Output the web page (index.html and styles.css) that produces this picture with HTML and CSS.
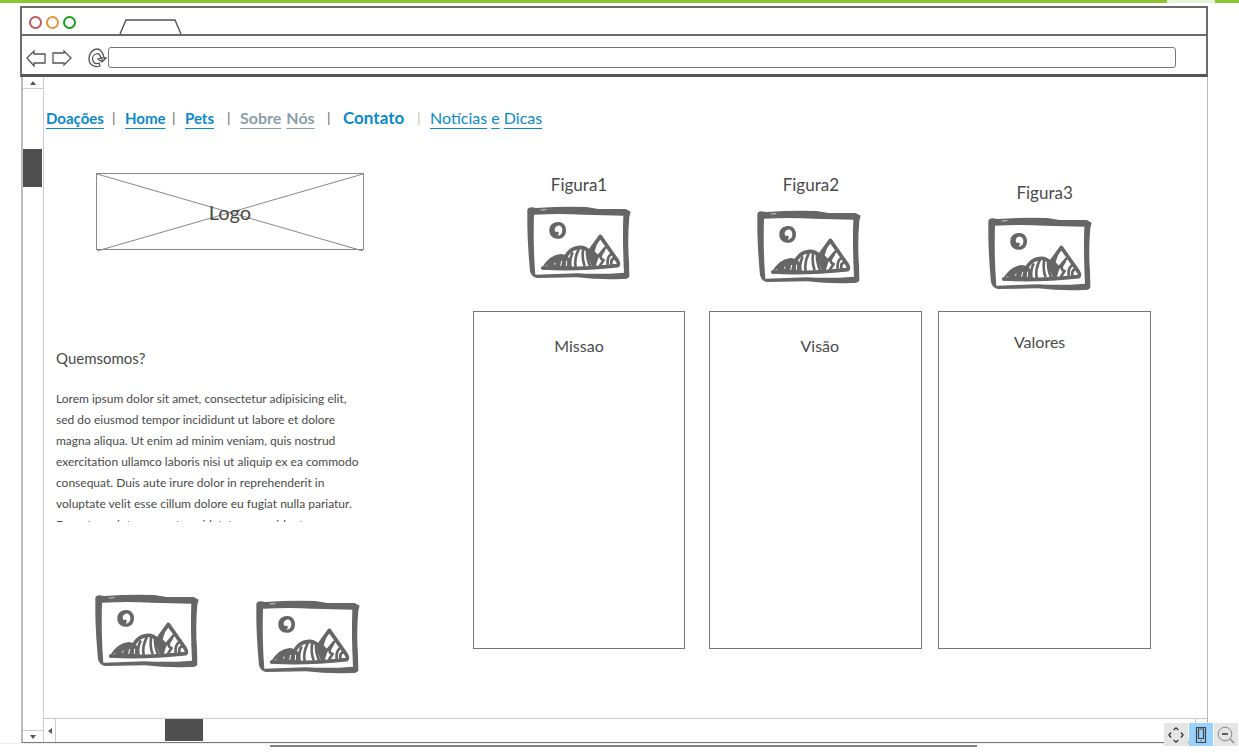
FILE: index.html
```html
<!DOCTYPE html>
<html lang="pt-BR">
<head>
<meta charset="utf-8">
<title>Sobre Nós</title>
<link rel="stylesheet" href="styles.css">
</head>
<body>
<svg class="defs" aria-hidden="true">
  <symbol id="picture" viewBox="0 0 312 222">
    <path fill="#666" fill-rule="evenodd" d="M1 12 Q2 5 14 4 L28 6 Q110 0 178 3 L214 9 L296 9 L311 17 L307 32 Q301 100 306 165 L307 212 Q302 220 285 219 Q220 222 150 214 L30 216 Q14 214 9 196 Q2 120 1 60 Z M21 26 Q100 22 170 26 L289 29 Q286 100 291 200 Q220 206 150 202 L25 206 Q18 120 21 26 Z"/>
    <path stroke="#fff" stroke-width="2" d="M41 12 L58 11"/>
    <path fill="#666" fill-rule="evenodd" d="M92 48 C108 46 118 60 117 74 C116 90 106 99 91 98 C75 97 66 86 67 71 C68 57 78 49 92 48 Z M93 59 C101 57 107 66 106 74 C106 82 100 88 92 89 C99 80 95 76 86 78 C80 70 84 61 93 59 Z"/>
    <path fill="#666" d="M44 186 Q66 147 101 144 Q119 145 128 158 L126 184 L46 191 Z"/>
    <path fill="#666" d="M187 133 L212 108 L203 136 L216 150 L205 184 L194 180 L180 146 Z"/>
    <g fill="none" stroke="#666" stroke-linecap="round" stroke-linejoin="round">
      <path stroke-width="11" d="M47 186 Q150 192 272 179 Q277 174 271 164 L220 91 L187 137 Q172 121 153 125 Q129 128 115 154"/>
      <path stroke-width="8" d="M136 142 Q126 162 131 183 M155 130 Q141 158 146 183 M168 132 Q165 160 172 178 M180 136 Q179 156 189 181 M235 125 L207 158 M230 134 Q212 158 230 162 L220 177 M252 145 Q240 153 242 174 M261 157 Q249 162 254 178"/>
    </g>
    <path fill="none" stroke="#fff" stroke-width="3" d="M57 181 L60 178 M83 176 L84 170 M101 180 L104 165 M118 180 L119 164 M264 174 L266 170"/>
  </symbol>
</svg>

<div class="strip"><span class="strip-tab"></span></div>

<div class="browser">
  <header class="titlebar">
    <span class="light red"></span><span class="light amber"></span><span class="light green"></span>
    <svg class="tab" width="64" height="15" viewBox="0 0 64 15"><path d="M2 15 L8 1 H57 L63 15" fill="none" stroke="#555" stroke-width="1.4"/></svg>
  </header>

  <div class="toolbar">
    <button class="tool" aria-label="Voltar"><svg width="20" height="18" viewBox="0 0 20 18"><path d="M1 9 L8 2 V5 H19 V14 H8 V17 Z"/></svg></button>
    <button class="tool" aria-label="Avançar"><svg width="20" height="18" viewBox="0 0 20 18"><path d="M19 9 L12 2 V4 H1 V14 H12 V16 Z"/></svg></button>
    <button class="tool reload" aria-label="Recarregar"><svg width="19" height="20" viewBox="0 0 19 20"><path d="M11 15 L12 18 C7 20 1 17 1 11 C1 5 5 1 9 1 C13 1 15 5 16 10 H18 L14 14 L10 11 L13 10 C12 6 10 5 8 6 C5 7 4 10 5 13 C6 16 9 16 11 15 Z M14 14 V9"/></svg></button>
    <input class="address" type="text" aria-label="Endereço">
  </div>

  <div class="viewport">
    <div class="vscroll">
      <button class="step" aria-label="Subir"><svg width="6" height="4" viewBox="0 0 6 4"><path d="M3 0 L6 4 H0 Z"/></svg></button>
      <div class="vtrack"><div class="vthumb"></div></div>
      <button class="step down" aria-label="Descer"><svg width="6" height="4" viewBox="0 0 6 4"><path d="M3 4 L6 0 H0 Z"/></svg></button>
    </div>

    <main class="page">
      <nav class="menu">
        <a href="#doacoes"><u>Doações</u></a><i>|</i>
        <a href="#home"><u>Home</u></a><i>|</i>
        <a href="#pets"><u>Pets</u></a><i>|</i>
        <a href="#sobre" class="current"><u>Sobre</u> <u>Nós</u></a><i>|</i>
        <a href="#contato" class="plain">Contato</a><i class="pale">|</i>
        <a href="#noticias" class="light-link"><u>Notícias</u> <u>e</u> <u>Dicas</u></a>
      </nav>

      <div class="columns">
        <section class="about">
          <div class="logo">
            <svg viewBox="0 0 266 75" preserveAspectRatio="none"><path d="M0 0 L266 75 M266 0 L0 75" stroke="#888" stroke-width="1"/></svg>
            <span>Logo</span>
          </div>
          <h2>Quemsomos?</h2>
          <p class="lorem">Lorem ipsum dolor sit amet, consectetur adipisicing elit,<br>sed do eiusmod tempor incididunt ut labore et dolore<br>magna aliqua. Ut enim ad minim veniam, quis nostrud<br>exercitation ullamco laboris nisi ut aliquip ex ea commodo<br>consequat. Duis aute irure dolor in reprehenderit in<br>voluptate velit esse cillum dolore eu fugiat nulla pariatur.<br>Excepteur sint occaecat cupidatat non proident,</p>
          <div class="thumbs">
            <svg class="picture"><use href="#picture"/></svg>
            <svg class="picture lower"><use href="#picture"/></svg>
          </div>
        </section>

        <section class="value first">
          <div class="figure"><h3>Figura1</h3><svg class="picture"><use href="#picture"/></svg></div>
          <div class="card"><h4>Missao</h4></div>
        </section>
        <section class="value second">
          <div class="figure"><h3>Figura2</h3><svg class="picture"><use href="#picture"/></svg></div>
          <div class="card"><h4>Visão</h4></div>
        </section>
        <section class="value third">
          <div class="figure"><h3>Figura3</h3><svg class="picture"><use href="#picture"/></svg></div>
          <div class="card"><h4>Valores</h4></div>
        </section>
      </div>
    </main>

    <div class="hscroll">
      <button class="step" aria-label="Esquerda"><svg width="4" height="6" viewBox="0 0 4 6"><path d="M0 3 L4 0 V6 Z"/></svg></button>
      <div class="htrack"><div class="hthumb"></div></div>
      <span class="step end"></span>
    </div>
  </div>
</div>

<footer class="bottom"><div class="bar"></div></footer>

<div class="zoom-tools">
  <button aria-label="Mover"><svg width="18" height="18" viewBox="0 0 18 18"><path d="M6.500 4 L9 2 L11.500 4 M6.500 14 L9 16 L11.500 14 M4 6.500 L2 9 L4 11.500 M14 6.500 L16 9 L14 11.500" stroke-width="1.500"/></svg></button>
  <button class="active" aria-label="Ajustar"><svg width="12" height="18" viewBox="0 0 12 18"><path d="M1.500 1.500 H10.500 V16.500 H1.500 Z M3.500 3 H8.500 V12.500 H3.500 Z" stroke-width="1.200"/><path d="M5 14.500 H7" stroke="#68a"/></svg></button>
  <button aria-label="Reduzir"><svg width="18" height="18" viewBox="0 0 18 18"><circle cx="8" cy="8" r="6.800" stroke="#888"/><path d="M13 13 L17 17" stroke="#888" stroke-width="1.500"/><path d="M5 8 H11" stroke-width="1.700"/></svg></button>
</div>
</body>
</html>
```
FILE: styles.css
```css
* { box-sizing: border-box; }

body {
  margin: 0;
  min-height: 100vh;
  display: flex;
  flex-direction: column;
  background: #fff;
  color: #4a4a4a;
  font-family: Lato, sans-serif;
}

h2, h3, h4, p { margin: 0; font-weight: 400; }
button { padding: 0; border: 0; background: none; display: flex; align-items: center; justify-content: center; }
.defs { position: absolute; width: 0; height: 0; }

.strip { height: 3px; background: #8dc531; display: flex; justify-content: flex-end; padding-right: 24px; }
.strip-tab { width: 48px; background: #e8f4d8; }

.browser { flex: 1; display: flex; flex-direction: column; margin: 3px 31px 0 20px; }

.titlebar {
  height: 28px;
  display: flex;
  align-items: center;
  gap: 4px;
  padding-left: 7px;
  border: 2px solid #6b6b6b;
  border-bottom: 0;
}
.light { width: 13px; height: 13px; border: 2px solid; border-radius: 50%; margin-top: 3px; }
.red { color: #c1565b; }
.amber { color: #e2953c; }
.green { color: #16a11c; }
.tab { align-self: flex-end; margin-left: 38px; }

.toolbar {
  height: 43px;
  display: flex;
  align-items: center;
  padding: 5px 30px 0 4px;
  border: 2px solid #6b6b6b;
  border-bottom: 3px solid #555;
}
.tool { margin-right: 6px; }
.tool path { fill: none; stroke: #555; stroke-width: 1.3; }
.reload { margin: 0 0 0 10px; }
.address {
  flex: 1;
  min-width: 0;
  height: 21px;
  margin-left: 1px;
  border: 1px solid #777;
  border-radius: 3px;
  background: #fff;
  font: 14px Lato, sans-serif;
}

.viewport {
  flex: 1;
  display: grid;
  grid-template: 1fr 24px / 21px 1fr;
  margin-left: 1px;
  border: solid #bbb;
  border-width: 0 1px 1px 2px;
  border-bottom-color: #777;
}

.vscroll { grid-row: 1 / 3; display: flex; flex-direction: column; border-right: 1px solid #ccc; }
.step { height: 12px; border-bottom: 1px solid #ccc; }
.step path { fill: #555; }
.step.down { border: 0; border-top: 1px solid #ccc; }
.vtrack { flex: 1; padding: 60px 1px 0 0; }
.vthumb { height: 38px; background: #505050; }

.hscroll { display: flex; border-top: 1px solid #ccc; }
.hscroll .step { width: 12px; height: auto; border: 0; border-right: 1px solid #ccc; }
.hscroll .end { border: 0; border-left: 1px solid #ccc; }
.htrack { flex: 1; padding-left: 109px; }
.hthumb { width: 38px; height: 22px; background: #505050; }

.menu {
  display: grid;
  grid-template-columns: 66px 13px 47px 13px 42px 13px 87px 16px 74px 13px auto;
  padding: 31px 0 0 2px;
  font-size: 15px;
  line-height: 20px;
  font-weight: 700;
  white-space: nowrap;
}
.menu a { color: #0a89cc; text-decoration: none; }
.menu u { text-underline-offset: 4px; text-decoration-thickness: 1px; }
.menu i { font-style: normal; font-weight: 400; font-size: 14px; color: #666; }
.menu .pale { color: #bbb; }
.menu .current { display: flex; gap: 5px; font-size: 16px; color: #8c9fa9; }
.menu .light-link { font-weight: 400; font-size: 16px; }
.menu .plain { font-size: 17px; }

.columns {
  display: grid;
  grid-template-columns: 429fr 213fr 24fr 213fr 16fr 213fr 56fr;
  padding-top: 36px;
}

.about { padding: 9px 64px 0 12px; }
.logo {
  display: grid;
  width: 268px;
  height: 77px;
  margin-left: 40px;
  border: 1px solid #888;
}
.logo > * { grid-area: 1 / 1; width: 100%; height: 100%; }
.logo span { font-size: 20px; line-height: 77px; text-align: center; }
.about h2 { margin-top: 98px; font-size: 15px; line-height: 20px; }
.lorem { height: 134px; margin-top: 20px; overflow: hidden; font-size: 12px; line-height: 21px; white-space: nowrap; }
.picture { display: block; width: 104px; height: 74px; }
.thumbs { display: flex; gap: 57px; padding: 72px 0 0 39px; }
.lower { margin-top: 6px; }

.value { display: flex; flex-direction: column; }
.first { grid-column: 2; }
.second { grid-column: 4; }
.third { grid-column: 6; }
.figure { height: 147px; padding: 9px 0 0 0; display: flex; flex-direction: column; align-items: center; gap: 9px; }
.second .figure { padding-right: 14px; gap: 13px; }
.third .figure { padding: 17px 10px 0 0; gap: 12px; }
.figure h3 { font-size: 17px; line-height: 24px; }
.second h3 { padding-left: 4px; }
.third h3 { padding-left: 10px; }
.card { height: 338px; padding-top: 24px; border: 1px solid #777; text-align: center; }
.card h4 { font-size: 16px; line-height: 20px; }
.second .card { padding-left: 8px; }
.third .card { padding: 20px 10px 0 0; }

.bottom { height: 10px; padding: 1px 262px 0 270px; border-top: 1px solid #eee; }
.bar { height: 2px; background: #808080; }

.zoom-tools { position: absolute; right: 1px; bottom: 7px; display: flex; gap: 1px; }
.zoom-tools button { width: 24px; height: 23px; background: #e5e5e5; }
.zoom-tools .active { background: #99d1ff; }
.zoom-tools svg { fill: none; stroke: #444; }
```
